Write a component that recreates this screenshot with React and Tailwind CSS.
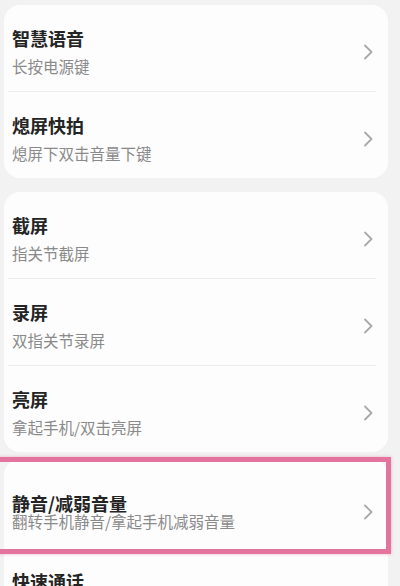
import React from "react";

const font = { fontFamily: '"Noto Sans CJK SC", "Noto Sans", sans-serif' };

const Chevron = () => (
  <svg width="10" height="16" viewBox="0 0 10 16" fill="none" className="shrink-0">
    <path d="M2 1.5L8.5 8L2 14.5" stroke="#a9a9a9" strokeWidth="1.8" strokeLinecap="round" strokeLinejoin="round" />
  </svg>
);

const Row = ({ title, sub }) => (
  <div className="flex items-center justify-between pl-[8px] pr-[15px] pt-[20px] pb-[14px]">
    <div className="flex flex-col">
      <span className="text-[18px] leading-[26px] font-bold text-[#242424]">{title}</span>
      <span className="mt-[4px] text-[15.5px] leading-[22px] text-[#8a8a8a]">{sub}</span>
    </div>
    <div className="pt-[1px]">
      <Chevron />
    </div>
  </div>
);

const Divider = () => <div className="ml-[4px] mr-[12px] h-px bg-[#ececec]" />;

const Card = ({ items, className = "" }) => (
  <div className={`rounded-[16px] bg-[#fdfdfd] ${className}`}>
    {items.map((it, i) => (
      <React.Fragment key={it.title}>
        {i > 0 && <Divider />}
        <Row title={it.title} sub={it.sub} />
      </React.Fragment>
    ))}
  </div>
);

export default function App() {
  return (
    <div
      className="relative h-[586px] w-[400px] overflow-hidden bg-[#f2f2f2] pl-[4px] pr-[12px] pt-[5px]"
      style={font}
    >
      <Card
        items={[
          { title: "智慧语音", sub: "长按电源键" },
          { title: "熄屏快拍", sub: "熄屏下双击音量下键" },
        ]}
      />
      <Card
        className="mt-[14px]"
        items={[
          { title: "截屏", sub: "指关节截屏" },
          { title: "录屏", sub: "双指关节录屏" },
          { title: "亮屏", sub: "拿起手机/双击亮屏" },
        ]}
      />
      <div className="mt-[7px] rounded-t-[16px] bg-[#fdfdfd]">
        <div className="flex items-center justify-between pl-[8px] pr-[15px] pt-[35px] pb-[24px]">
          <div className="flex flex-col">
            <span className="text-[18px] leading-[18px] font-bold text-[#242424]">静音/减弱音量</span>
            <span className="text-[15.5px] leading-[18px] text-[#8a8a8a]">翻转手机静音/拿起手机减弱音量</span>
          </div>
          <Chevron />
        </div>
        <div className="pl-[8px] pt-[19px]">
          <span className="block text-[18px] leading-[16px] font-bold text-[#242424]">快速通话</span>
        </div>
      </div>
      <div className="pointer-events-none absolute left-[-10px] top-[457px] h-[97px] w-[401px] border-[5px] border-[#e3749e] shadow-[0_0_3px_rgba(227,116,158,0.5)]" />
    </div>
  );
}
